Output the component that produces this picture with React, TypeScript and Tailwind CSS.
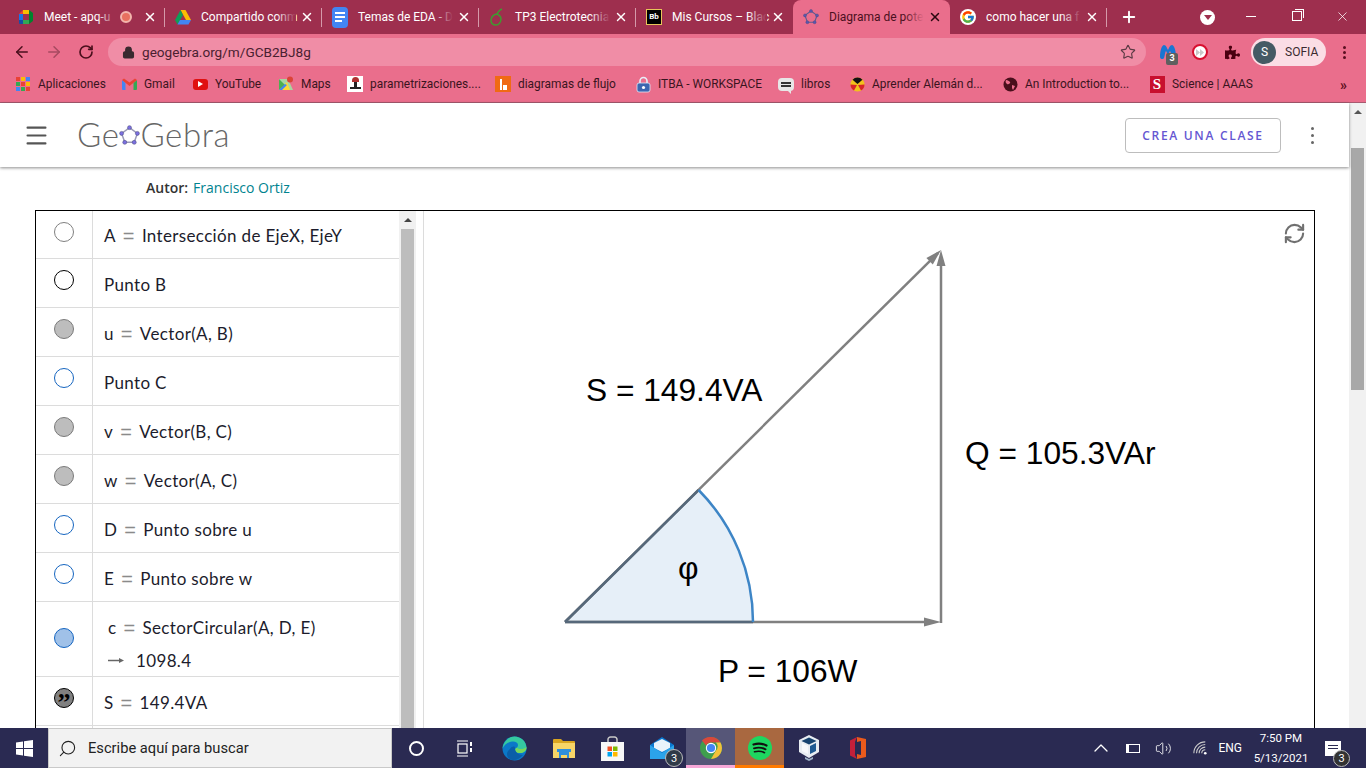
import { ArrowLeft, ArrowRight, ChevronUp, Lock, Menu, Plus, RefreshCw, RotateCw, Search, Star, Volume2, X } from "lucide-react"
import { FaPuzzlePiece } from "react-icons/fa"
import { FcGoogle } from "react-icons/fc"
import type { ReactNode } from "react"

function Pentagon({ size = 20, line = "#9a9ab8", dot = "#7b6fe0" }: { size?: number; line?: string; dot?: string }) {
  const pts = [[10, 2.5], [17.5, 8], [14.5, 16.5], [5.5, 16.5], [2.5, 8]]
  return (
    <svg width={size} height={size} viewBox="0 0 20 20">
      <polygon points="10,2.5 17.5,8 14.5,16.5 5.5,16.5 2.5,8" fill="none" stroke={line} strokeWidth="1.4" />
      {pts.map((p, i) => (
        <circle key={i} cx={p[0]} cy={p[1]} r="1.9" fill={dot} stroke="#4a4a7a" strokeWidth="0.5" />
      ))}
    </svg>
  )
}

function MeetIcon() {
  return (
    <svg width="16" height="16" viewBox="0 0 16 16">
      <path d="M1 5 5 1v4z" fill="#ea4335" />
      <rect x="5" y="1" width="6" height="4" fill="#fbbc04" />
      <rect x="1" y="5" width="4" height="6" fill="#1a73e8" />
      <rect x="5" y="11" width="6" height="4" fill="#34a853" />
      <path d="M1 11h4v4H2a1 1 0 0 1-1-1z" fill="#174ea6" />
      <path d="M11 1v14l4-3V4z" fill="#00832d" />
      <rect x="5" y="5" width="6" height="6" fill="#a02f4e" />
    </svg>
  )
}

function DriveIcon() {
  return (
    <svg width="16" height="15" viewBox="0 0 16 15">
      <path d="M5.5 0h5L16 10h-5z" fill="#fbbc04" />
      <path d="M5.5 0 0 10l2.5 4.5L8 5z" fill="#0f9d58" />
      <path d="M2.5 14.5h11L16 10H5z" fill="#4285f4" />
    </svg>
  )
}

function DocsIcon() {
  return (
    <div className="flex h-[21px] w-4 flex-col gap-[2px] rounded-sm bg-[#4285f4] px-[3px] pt-[5px]">
      <div className="h-[2px] bg-white" />
      <div className="h-[2px] bg-white" />
      <div className="h-[2px] w-[7px] bg-white" />
    </div>
  )
}

function SwirlIcon() {
  return (
    <svg width="16" height="18" viewBox="0 0 16 18" fill="none" stroke="#3f9a30" strokeWidth="1.5">
      <path d="M13 1c-3 1-4 3-5 5-3 0-6 3-6 6 0 3 2 5 5 5 3 0 5-3 5-6 0-2-2-4-4-5" />
    </svg>
  )
}

function BbIcon() {
  return (
    <div className="flex h-4 w-4 items-center justify-center overflow-hidden border border-[#e8c55a] bg-black text-[8px] font-bold leading-none text-white">
      Bb
    </div>
  )
}

function GoogleIcon() {
  return (
    <div className="flex h-4 w-4 items-center justify-center rounded-full bg-white">
      <FcGoogle size={14} />
    </div>
  )
}

// only what the tab strip actually shows of each title
const tabs: { title: string; icon: ReactNode; active?: boolean; rec?: boolean; sep?: boolean }[] = [
  { title: "Meet - apq-u", icon: <MeetIcon />, rec: true, sep: true },
  { title: "Compartido conm", icon: <DriveIcon />, sep: true },
  { title: "Temas de EDA - D", icon: <DocsIcon />, sep: true },
  { title: "TP3 Electrotecnia", icon: <SwirlIcon />, sep: true },
  { title: "Mis Cursos – Blac", icon: <BbIcon /> },
  { title: "Diagrama de pote", icon: <Pentagon size={18} line="#5c5c90" dot="#5a55b0" />, active: true },
  { title: "como hacer una f", icon: <GoogleIcon />, sep: true },
]

function Tab({ title, icon, active, rec, sep }: (typeof tabs)[number]) {
  return (
    <div
      className={`relative flex h-full w-[157px] shrink-0 items-center pl-[10px] pr-[8px] ${
        active ? "rounded-t-lg bg-[#ea6e8c] text-[#4a1020]" : "text-white"
      }`}
    >
      <div className="flex w-4 shrink-0 justify-center">{icon}</div>
      <div className="relative ml-[10px] min-w-0 flex-1 whitespace-nowrap text-xs">
        {title}
        <div
          className={`absolute inset-y-0 right-0 w-5 bg-gradient-to-r from-transparent ${
            active ? "to-[#ea6e8c]" : "to-[#9e2f4e]"
          }`}
        />
      </div>
      {rec && <div className="ml-[3px] mr-[7px] h-[12px] w-[12px] shrink-0 rounded-full border-2 border-[#f3b5ac] bg-[#e8705f]" />}
      <X size={14} strokeWidth={2.5} className={`ml-[4px] shrink-0 ${active ? "text-[#2a0810]" : "text-white"}`} />
      {sep && <div className="absolute right-0 top-[8px] h-[19px] w-px bg-[#d59aaa]" />}
    </div>
  )
}

function AppsIcon() {
  const colors = ["#e94235", "#fbbc04", "#4285f4", "#34a853", "#e94235", "#fbbc04", "#4285f4", "#34a853", "#e94235"]
  return (
    <div className="grid h-[14px] w-[14px] grid-cols-3 gap-[1px]">
      {colors.map((c, i) => (
        <div key={i} style={{ backgroundColor: c }} />
      ))}
    </div>
  )
}

function GmailIcon() {
  return (
    <svg width="15" height="12" viewBox="0 0 15 12">
      <path d="M0 2v9a1 1 0 0 0 1 1h2.5V5z" fill="#4285f4" />
      <path d="M15 2v9a1 1 0 0 1-1 1h-2.5V5z" fill="#34a853" />
      <path d="M0 2 2 .5l5.5 4L13 .5 15 2 7.5 8z" fill="#ea4335" />
    </svg>
  )
}

function YoutubeIcon() {
  return (
    <div className="flex h-[11px] w-[15px] items-center justify-center rounded-[3px] bg-[#e01010]">
      <div className="h-0 w-0 border-y-[3px] border-l-[5px] border-y-transparent border-l-white" />
    </div>
  )
}

function MapsIcon() {
  return (
    <svg width="16" height="16" viewBox="0 0 16 16">
      <path d="M1 3h9l5 11H1z" fill="#a8d5a0" />
      <path d="M1 14 9 6l3 8z" fill="#fdd835" />
      <path d="M1 3l6 6-6 5z" fill="#4caf50" />
      <path d="M1 14 7 8l2 1-5 5z" fill="#4285f4" />
      <circle cx="12" cy="3.5" r="3" fill="#db4437" />
    </svg>
  )
}

function ParamIcon() {
  return (
    <div className="flex h-4 w-4 flex-col items-center bg-white pt-[1px]">
      <div className="h-[5px] w-[7px] rounded-t-full bg-[#b03030]" />
      <div className="h-[5px] w-[3px] bg-[#222]" />
      <div className="h-[2px] w-[11px] bg-[#222]" />
    </div>
  )
}

function FlujoIcon() {
  return (
    <div className="flex h-4 w-4 items-end justify-center gap-[1px] bg-[#f06a14] pb-[2px]">
      <div className="h-[11px] w-[2px] bg-white" />
      <div className="h-[5px] w-[4px] bg-white" />
    </div>
  )
}

function ItbaIcon() {
  return (
    <svg width="15" height="17" viewBox="0 0 15 17">
      <path d="M4 8V5a3.5 3.5 0 0 1 7 0v3" fill="none" stroke="#e8eef8" strokeWidth="1.6" />
      <rect x="1" y="7" width="13" height="9" rx="2" fill="#3c66b0" stroke="#dfe6f5" strokeWidth="0.8" />
      <circle cx="7.5" cy="11.5" r="1.6" fill="#fff" />
    </svg>
  )
}

function LibrosIcon() {
  return (
    <div className="relative flex h-[13px] w-4 items-center justify-center rounded-sm bg-[#e7e7e7]">
      <div className="flex flex-col gap-[1px]">
        <div className="h-[2px] w-[10px] bg-[#333]" />
        <div className="h-[2px] w-[10px] bg-[#333]" />
      </div>
      <div className="absolute -bottom-[3px] right-[3px] h-0 w-0 border-l-[3px] border-t-[3px] border-l-transparent border-t-[#e7e7e7]" />
    </div>
  )
}

function AlemanIcon() {
  return (
    <svg width="15" height="15" viewBox="0 0 15 15">
      <circle cx="7.5" cy="7.5" r="7" fill="#f2c11c" />
      <path d="M7.5.5a7 7 0 0 1 5 2.2L7.5 7 2.5 2.7A7 7 0 0 1 7.5.5z" fill="#111" />
      <path d="M.5 7.5 7 8l-3 5.5a7 7 0 0 1-3.5-6z" fill="#d8232a" />
      <path d="M14.5 7.5 8 8l3 5.5a7 7 0 0 0 3.5-6z" fill="#d8232a" />
    </svg>
  )
}

function GlobeIcon() {
  return (
    <svg width="15" height="15" viewBox="0 0 15 15">
      <circle cx="7.5" cy="7.5" r="7" fill="#4a0f1c" />
      <path d="M3 3c2 0 3 1 4 2S5 8 4 7 2 5 3 3zM9 8l3 1-2 4-1-2z" fill="#ea6e8c" />
    </svg>
  )
}

function ScienceIcon() {
  return <div className="flex h-[17px] w-[15px] items-center justify-center bg-[#c8102e] font-['Liberation_Serif',serif] text-[15px] font-bold leading-none text-white">S</div>
}

const bookmarks = [
  { label: "Aplicaciones", icon: <AppsIcon />, width: "w-[106px]" },
  { label: "Gmail", icon: <GmailIcon />, width: "w-[71px]" },
  { label: "YouTube", icon: <YoutubeIcon />, width: "w-[86px]" },
  { label: "Maps", icon: <MapsIcon />, width: "w-[69px]" },
  { label: "parametrizaciones....", icon: <ParamIcon />, width: "w-[148px]" },
  { label: "diagramas de flujo", icon: <FlujoIcon />, width: "w-[140px]" },
  { label: "ITBA - WORKSPACE", icon: <ItbaIcon />, width: "w-[143px]" },
  { label: "libros", icon: <LibrosIcon />, width: "w-[71px]" },
  { label: "Aprender Alemán d...", icon: <AlemanIcon />, width: "w-[153px]" },
  { label: "An Introduction to...", icon: <GlobeIcon />, width: "w-[147px]" },
  { label: "Science | AAAS", icon: <ScienceIcon />, width: "w-[150px]" },
]

type MarbleKind = "grey" | "black" | "fill" | "blue" | "sector" | "quote"

function Marble({ kind }: { kind: MarbleKind }) {
  const cls: Record<MarbleKind, string> = {
    grey: "border-[#808080] bg-white",
    black: "border-black bg-white",
    fill: "border-[#7a7a7a] bg-[#bdbdbd]",
    blue: "border-[#1565c0] bg-white",
    sector: "border-[#1565c0] bg-[#a0c1e8]",
    quote: "border-black bg-[#808080]",
  }
  return (
    <div className={`flex h-5 w-5 items-center justify-center rounded-full border ${cls[kind]}`}>
      {kind === "quote" && <span className="mt-[9px] font-['Liberation_Serif',serif] text-[26px] font-bold leading-none text-black">”</span>}
    </div>
  )
}

function Eq() {
  return <span className="mx-[7px] inline-block align-baseline font-['Liberation_Sans',sans-serif] text-[20px] font-light leading-none text-[#8a8a8a]">=</span>
}

const rows: { kind: MarbleKind; text: ReactNode; h: string }[] = [
  { kind: "grey", h: "h-[48px]", text: <>A<Eq />Intersección de EjeX, EjeY</> },
  { kind: "black", h: "h-[49px]", text: "Punto B" },
  { kind: "fill", h: "h-[49px]", text: <>u<Eq />Vector(A, B)</> },
  { kind: "blue", h: "h-[49px]", text: "Punto C" },
  { kind: "fill", h: "h-[49px]", text: <>v<Eq />Vector(B, C)</> },
  { kind: "fill", h: "h-[49px]", text: <>w<Eq />Vector(A, C)</> },
  { kind: "blue", h: "h-[49px]", text: <>D<Eq />Punto sobre u</> },
  { kind: "blue", h: "h-[49px]", text: <>E<Eq />Punto sobre w</> },
  {
    kind: "sector",
    h: "h-[75px]",
    text: (
      <div className="ml-[4px] flex flex-col gap-[9px] pt-[10px]">
        <div className="flex h-6 items-center">c<Eq />SectorCircular(A, D, E)</div>
        <div className="flex h-6 items-center">
          <svg width="16" height="7" viewBox="0 0 16 7" className="mr-[12px]">
            <path d="M0 3.5h12" stroke="#666" strokeWidth="1.5" />
            <path d="M11 1l5 2.5-5 2.5z" fill="#666" />
          </svg>
          1098.4
        </div>
      </div>
    ),
  },
  { kind: "quote", h: "h-[49px]", text: <>S<Eq />149.4VA</> },
  { kind: "grey", h: "h-[49px]", text: "" },
]

function AlgebraList() {
  return (
    <div className="flex h-full w-[363px] shrink-0 flex-col">
      {rows.map((r, i) => (
        <div key={i} className={`flex shrink-0 border-b border-[#dcdcdc] ${r.h}`}>
          <div className={`flex w-[57px] shrink-0 justify-center border-r border-[#dcdcdc] ${r.kind === "sector" ? "items-center pb-[3px]" : "items-start pt-[11px]"}`}>
            <Marble kind={r.kind} />
          </div>
          <div className={`flex flex-1 items-center whitespace-nowrap pl-[11px] font-['Lato',sans-serif] text-[17px] leading-6 tracking-[0.35px] text-[#1c1c2c] ${r.kind === "sector" ? "" : "pt-[3px]"}`}>
            {r.text}
          </div>
        </div>
      ))}
    </div>
  )
}

function Diagram() {
  return (
    <div className="relative min-w-0 flex-1 overflow-hidden bg-white font-['Liberation_Sans',sans-serif] text-[31.7px] leading-9 text-black">
      {/* coordinates in the viewBox are page pixels */}
      <svg className="absolute inset-0" width="890" height="517" viewBox="424 211 890 517">
        <path d="M565 622H753A188 188 0 0 0 698.6 490Z" fill="#e6eff8" />
        <line x1="565" y1="622" x2="938" y2="253" stroke="#808080" strokeWidth="2.5" />
        <line x1="565" y1="622" x2="926" y2="622" stroke="#808080" strokeWidth="2.5" />
        <line x1="941" y1="623" x2="941" y2="262" stroke="#808080" strokeWidth="2.5" />
        <line x1="565" y1="622" x2="753" y2="622" stroke="#56687a" strokeWidth="2.5" />
        <line x1="565" y1="622" x2="698.6" y2="490" stroke="#56687a" strokeWidth="2.5" />
        <path d="M753 622A188 188 0 0 0 698.6 490" fill="none" stroke="#3d85c6" strokeWidth="2.5" />
        <polygon points="941,622 924,617.5 924,626.5" fill="#808080" />
        <polygon points="941,250 936.5,266 945.5,266" fill="#808080" />
        <polygon points="941,250 932.8,264.4 926.4,258" fill="#808080" />
      </svg>
      <span className="absolute left-[162px] top-[161px] whitespace-nowrap">S = 149.4VA</span>
      <span className="absolute left-[541px] top-[224px] whitespace-nowrap">Q = 105.3VAr</span>
      <span className="absolute left-[294px] top-[442px] whitespace-nowrap">P = 106W</span>
      <span className="absolute left-[254px] top-[339px]">φ</span>
      <RefreshCw size={23} strokeWidth={2.2} className="absolute right-[8px] top-[11px] text-[#707070]" />
    </div>
  )
}

function ChromeLogo() {
  return (
    <svg width="24" height="24" viewBox="0 0 24 24">
      <circle cx="12" cy="12" r="11" fill="#3f9e4d" />
      <path d="M12 1a11 11 0 0 1 9.5 5.5H12a5.5 5.5 0 0 0-5 3L3 4.5A11 11 0 0 1 12 1z" fill="#d9483b" />
      <path d="M21.5 6.5A11 11 0 0 1 12 23l4.8-8.3a5.5 5.5 0 0 0 0-8.2z" fill="#f3c13a" />
      <circle cx="12" cy="12" r="5.2" fill="#fff" />
      <circle cx="12" cy="12" r="4.1" fill="#4285f4" />
    </svg>
  )
}

function TaskSlot({ children, className = "" }: { children: ReactNode; className?: string }) {
  return <div className={`flex h-full w-[49px] shrink-0 items-center justify-center ${className}`}>{children}</div>
}

function Taskbar() {
  return (
    <div className="flex h-10 shrink-0 items-center bg-[#2a2a52] text-white">
      <div className="flex h-full w-[48px] shrink-0 items-center justify-center">
        <svg width="17" height="17" viewBox="0 0 17 17" fill="#fff">
          <path d="M0 2.4 7 1.4V8H0zM8 1.2 17 0v8H8zM0 9h7v6.6l-7-1zM8 9h9v8l-9-1.2z" />
        </svg>
      </div>
      <div className="flex h-full w-[344px] shrink-0 items-center border border-[#c9c9c9] bg-[#f2f2f2] pl-[9px] text-[14.7px] text-[#222]">
        <Search size={19} strokeWidth={1.4} className="-scale-x-100 text-[#222]" />
        <span className="ml-[11px]">Escribe aquí para buscar</span>
      </div>
      <TaskSlot>
        <div className="h-[15px] w-[15px] rounded-full border-2 border-white" />
      </TaskSlot>
      <TaskSlot>
        <svg width="17" height="17" viewBox="0 0 17 17" fill="none" stroke="#fff" strokeWidth="1.2">
          <path d="M0 1h11M0 16h11" />
          <rect x="1" y="4" width="9" height="9" />
          <path d="M14 2v4M14 8v4" strokeWidth="2" />
        </svg>
      </TaskSlot>
      <TaskSlot>
        <svg width="25" height="25" viewBox="0 0 25 25">
          <circle cx="12.5" cy="12.5" r="12" fill="#0b78c8" />
          <path d="M12.5.5C19 .5 24.5 5.5 24.5 12c0 3.5-3 5-6 5-4 0-5.500-1.500-5.500-3 0-2 3-2 3-5 0-2.500-3-4-6-3.500C5.500 6.300 2 9 .5 12.500 1.500 5.500 6.500.5 12.500.5z" fill="#35c9a0" />
          <path d="M24.5 11c0 3.5-3 6-6 6-4 0-5.500-1.500-5.500-3 0-1 .8-1.500 1.700-2.300 2.300 1.800 6.800 2 9.800-.7z" fill="#7ad65a" />
          <path d="M8 13c2-3 5-3 5-1 0 4 3 7 8 7-3 3.500-6 5-9 5-4 0-7-2-7-6 0-2 1.500-4 3-5z" fill="#0a5ea8" />
        </svg>
      </TaskSlot>
      <TaskSlot>
        <svg width="22" height="19" viewBox="0 0 22 19">
          <path d="M0 1a1 1 0 0 1 1-1h7l2 2h11a1 1 0 0 1 1 1v16H0z" fill="#d9a520" />
          <rect y="4" width="22" height="15" fill="#f7d567" />
          <path d="M4 10h14v3h-2v6h-2v-3H8v3H6v-6H4z" fill="#2f8fdc" />
        </svg>
      </TaskSlot>
      <TaskSlot>
        <svg width="23" height="25" viewBox="0 0 23 25">
          <path d="M7 7V3.5A2.5 2.5 0 0 1 9.500 1h4A2.500 2.500 0 0 1 16 3.500V7" fill="none" stroke="#c8c8c8" strokeWidth="1.5" />
          <rect y="6" width="23" height="19" fill="#f7f7f7" />
          <rect x="6.5" y="10.5" width="4.5" height="4.5" fill="#f25022" />
          <rect x="12" y="10.5" width="4.5" height="4.5" fill="#7fba00" />
          <rect x="6.5" y="16" width="4.5" height="4.5" fill="#00a4ef" />
          <rect x="12" y="16" width="4.5" height="4.5" fill="#ffb900" />
        </svg>
      </TaskSlot>
      <TaskSlot className="relative">
        <svg width="24" height="22" viewBox="0 0 24 22">
          <path d="M12 0 24 8v14H0V8z" fill="#0b78d0" />
          <path d="M4 6 12 2l8 4v5l-8 4-8-4z" fill="#e8f3fb" />
          <path d="M0 8v14h24V8l-12 8z" fill="#2ba3ea" />
        </svg>
        <div className="absolute bottom-[1px] right-[3px] flex h-[18px] w-[18px] items-center justify-center rounded-full border border-[#bbb] bg-[#2f3a48] text-[11px] leading-none">3</div>
      </TaskSlot>
      <TaskSlot className="border-b-[3px] border-[#f7a8d8] bg-[#565678] pt-[3px]">
        <ChromeLogo />
      </TaskSlot>
      <TaskSlot className="border-b-[3px] border-[#ff7a00] bg-[#a96840] pt-[3px]">
        <svg width="24" height="24" viewBox="0 0 24 24" fill="none" stroke="#111" strokeLinecap="round">
          <circle cx="12" cy="12" r="12" fill="#1ed760" stroke="none" />
          <path d="M5.5 8.5c4-1.200 9-1 13 1" strokeWidth="2.2" />
          <path d="M6 12.3c3.500-1 8-.8 11.500 1" strokeWidth="1.9" />
          <path d="M6.5 15.8c3-.8 7-.7 10 .9" strokeWidth="1.6" />
        </svg>
      </TaskSlot>
      <TaskSlot>
        <svg width="20" height="26" viewBox="0 0 20 26">
          <path d="M10 0 20 5v12l-10 6L0 17V5z" fill="#e8edf2" />
          <path d="M10 2.5 17.5 6 10 9.5 2.5 6z" fill="#16436f" />
          <path d="M3 8l6 3v8l-6-3z" fill="#f7f9fb" />
          <path d="M17 8l-6 3v8l6-3z" fill="#1f5a92" />
          <path d="M6 22l4 2 4-2v2l-4 2-4-2z" fill="#9fb4c8" />
        </svg>
      </TaskSlot>
      <TaskSlot>
        <svg width="18" height="24" viewBox="0 0 18 24">
          <path d="M8 1 17 3v18l-9 2z" fill="#ea5a1c" />
          <path d="M8 1 1 4.5v15L8 23l-2-4V6z" fill="#c4203a" />
          <path d="M6 6.5 12 5v14l-6-1.500z" fill="#2a2a52" />
        </svg>
      </TaskSlot>
      <div className="flex h-full flex-1 items-center justify-end text-[11.5px]">
        <ChevronUp size={24} strokeWidth={1.3} className="mr-[13px]" />
        <div className="mr-[15px] flex h-[9px] w-[14px] items-center border border-white">
          <div className="h-full w-[2px] bg-white" />
        </div>
        <Volume2 size={17} strokeWidth={1.2} className="mr-[21px]" />
        <svg width="14" height="14" viewBox="0 0 16 16" fill="none" stroke="#ccc" strokeWidth="1.2" className="mr-[11px]">
          <path d="M1 14A13 13 0 0 1 14 1M4 14A10 10 0 0 1 14 4M7 14a7 7 0 0 1 7-7M10 14a4 4 0 0 1 4-4" />
          <circle cx="14" cy="14" r="1.5" fill="#fff" stroke="none" />
        </svg>
        <span className="mr-[14px] text-xs">ENG</span>
        <div className="mr-[19px] flex w-[50px] flex-col items-center gap-[4px] whitespace-nowrap leading-4">
          <span>7:50 PM</span>
          <span>5/13/2021</span>
        </div>
        <div className="relative mr-[25px] h-[15px] w-[16px] bg-white">
          <div className="ml-[3px] mt-[4px] h-[1px] w-[10px] bg-[#2a2a52]" />
          <div className="ml-[3px] mt-[2px] h-[1px] w-[10px] bg-[#2a2a52]" />
          <div className="absolute -bottom-[11px] -right-[9px] flex h-[17px] w-[17px] items-center justify-center rounded-full border border-[#bbb] bg-[#333] text-[11px] leading-none">3</div>
        </div>
      </div>
    </div>
  )
}

export default function App() {
  return (
    <div className="flex h-[768px] w-[1366px] flex-col overflow-hidden bg-white font-['Roboto',sans-serif]">
      {/* tab strip */}
      <div className="flex h-[34px] shrink-0 items-end bg-[#9e2f4e] pl-2 text-white">
        <div className="flex h-[34px] items-stretch">
          {tabs.map((t) => (
            <Tab key={t.title} {...t} />
          ))}
        </div>
        <div className="flex h-full w-[44px] items-center justify-center">
          <Plus size={18} strokeWidth={2.5} />
        </div>
        <div className="ml-[49px] flex h-full items-center">
          <div className="flex h-[15px] w-[15px] items-center justify-center rounded-full bg-white">
            <div className="h-0 w-0 border-x-[4px] border-t-[5px] border-x-transparent border-t-[#9e2f4e]" />
          </div>
        </div>
        <div className="ml-auto flex h-full items-center pb-[2px]">
          <div className="flex w-[46px] justify-center"><div className="h-px w-[10px] bg-white" /></div>
          <div className="flex w-[46px] justify-center">
            <div className="relative h-[10px] w-[10px] border border-white">
              <div className="absolute -right-[3px] -top-[3px] h-[9px] w-[9px] border-r border-t border-white" />
            </div>
          </div>
          <div className="flex w-[46px] justify-center pr-[2px]"><X size={15} strokeWidth={1.2} /></div>
        </div>
      </div>

      {/* toolbar */}
      <div className="flex h-[34px] shrink-0 items-center bg-[#ea6e8c] pt-[2px] text-[#4a0f1c]">
        <div className="flex w-[44px] justify-center"><ArrowLeft size={18} strokeWidth={2} /></div>
        <div className="flex w-[20px] justify-center"><ArrowRight size={18} strokeWidth={2} className="text-[#a64a60]" /></div>
        <div className="flex w-[44px] justify-center"><RotateCw size={16} strokeWidth={2.5} /></div>
        <div className="flex h-[28px] w-[1038px] shrink-0 items-center rounded-full bg-[#f08da6] pl-[14px] pr-[10px]">
          <Lock size={13} strokeWidth={2.5} className="text-[#3a2a30]" fill="#3a2a30" />
          <span className="ml-[7px] text-[13.6px] text-[#4a2030]">geogebra.org/m/GCB2BJ8g</span>
          <Star size={16} strokeWidth={1.7} className="ml-auto text-[#5a3a44]" />
        </div>
        <div className="relative ml-[13px] flex w-[18px] justify-center">
          <svg width="16" height="15" viewBox="0 0 16 15" fill="#1976d2">
            <path d="M0 12C0 5 2 0 4 0c2 0 3 3 4 5 1-2 2-5 4-5 2 0 4 5 4 12 0 2-3 3-4 1-1-3-1-6-2-7-1 1-1 3-2 4-1-1-1-3-2-4-1 1-1 4-2 7-1 2-4 1-4-1z" />
          </svg>
          <div className="absolute left-[7px] top-[8px] flex h-[12px] w-[12px] items-center justify-center rounded-[2px] bg-[#5f5f5f] text-[9px] font-bold leading-none text-white">3</div>
        </div>
        <div className="ml-[15px] flex h-[16px] w-[16px] items-center justify-center rounded-full border-2 border-[#d81030] bg-white">
          <svg width="8" height="7" viewBox="0 0 8 7" fill="#c9c9c9">
            <path d="M0 0l4 3.5L0 7zM4 0l4 3.5L4 7z" />
          </svg>
        </div>
        <FaPuzzlePiece size={15} className="ml-[17px] text-[#4a0010]" />
        <div className="ml-[11px] flex h-[28px] w-[75px] items-center rounded-full bg-[#fbdde5] pl-[2px]">
          <div className="flex h-[23px] w-[23px] items-center justify-center rounded-full bg-[#455a64] text-xs text-white">S</div>
          <span className="ml-[9px] text-xs text-[#3a2a30]">SOFIA</span>
        </div>
        <div className="ml-[17px] flex flex-col gap-[2px]">
          <div className="h-[3px] w-[3px] rounded-full bg-[#5a0f20]" />
          <div className="h-[3px] w-[3px] rounded-full bg-[#5a0f20]" />
          <div className="h-[3px] w-[3px] rounded-full bg-[#5a0f20]" />
        </div>
      </div>

      {/* bookmarks */}
      <div className="flex h-[35px] shrink-0 items-center border-b border-[#a85a70] bg-[#ea6e8c] pb-[1px] pl-[15px] text-[11.9px] text-[#3a1420]">
        {bookmarks.map((b) => (
          <div key={b.label} className={`flex shrink-0 items-center ${b.width}`}>
            <div className="flex w-4 justify-center">{b.icon}</div>
            <span className="ml-[7px] whitespace-nowrap">{b.label}</span>
          </div>
        ))}
        <span className="ml-[41px] text-sm font-bold text-[#5a0f20]">»</span>
      </div>

      {/* page */}
      <div className="flex min-h-0 flex-1">
        <div className="flex min-w-0 flex-1 flex-col">
          <header className="relative z-10 flex h-[64px] shrink-0 items-center bg-white pl-[23px] pr-[35px] shadow-[0_1px_3px_rgba(0,0,0,0.45)]">
            <Menu size={27} strokeWidth={1.8} className="text-[#555]" />
            <div className="ml-[27px] flex items-center font-['Lato',sans-serif] text-[33px] font-light tracking-[0.6px] text-[#666]">
              <span>Ge</span>
              <Pentagon size={21} />
              <span>Gebra</span>
            </div>
            <button className="ml-auto mt-[1px] flex h-[35px] w-[156px] items-center justify-center rounded border border-[#bdbdbd] pt-[1px] font-['Open_Sans',sans-serif] text-xs font-semibold tracking-[1.7px] text-[#6557d2]">
              CREA UNA CLASE
            </button>
            <div className="ml-[30px] flex flex-col gap-[4px]">
              <div className="h-[3px] w-[3px] rounded-full bg-[#666]" />
              <div className="h-[3px] w-[3px] rounded-full bg-[#666]" />
              <div className="h-[3px] w-[3px] rounded-full bg-[#666]" />
            </div>
          </header>
          <div className="flex h-[43px] shrink-0 items-center pb-[1px] pl-[146px] font-['Open_Sans',sans-serif] text-sm">
            <span className="font-semibold text-[#333]">Autor:</span>
            <span className="ml-[5px] text-[#00838f]">Francisco Ortiz</span>
          </div>
          <div className="ml-[35px] flex min-h-0 w-[1280px] flex-1 border-x border-t border-black">
            <AlgebraList />
            <div className="flex w-[17px] shrink-0 flex-col items-center bg-[#f1f1f1]">
              <div className="my-[7px] h-0 w-0 border-x-[4px] border-b-[4px] border-x-transparent border-b-[#444]" />
              <div className="w-[13px] flex-1 bg-[#bdbdbd]" />
            </div>
            <div className="w-[8px] shrink-0 border-r border-[#dcdcdc] bg-white" />
            <Diagram />
          </div>
        </div>
        {/* page scrollbar */}
        <div className="flex w-[17px] shrink-0 flex-col items-center bg-[#f1f1f1]">
          <div className="mb-[34px] mt-[7px] h-0 w-0 border-x-[4px] border-b-[4px] border-x-transparent border-b-[#555]" />
          <div className="h-[242px] w-[13px] bg-[#a8a8a8]" />
        </div>
      </div>

      <Taskbar />
    </div>
  )
}
